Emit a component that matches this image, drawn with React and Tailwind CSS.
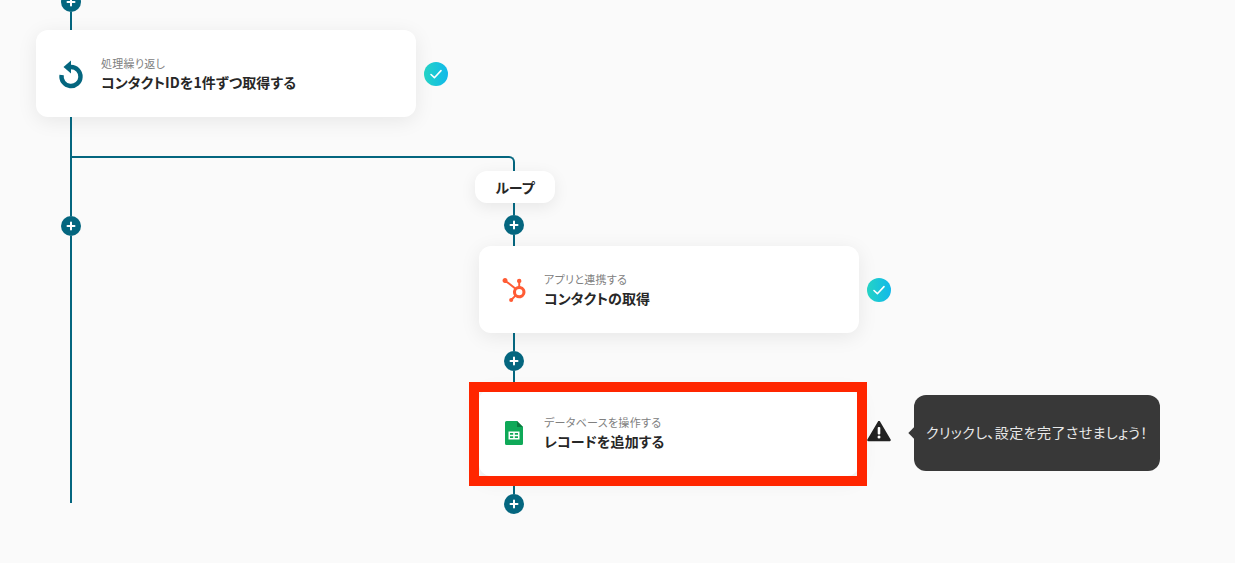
import React from "react";
import { SiHubspot } from "react-icons/si";

// vertical connector piece, centred in the 70px wide stem
function Line({ h }) {
  return <div className={`w-[2px] bg-[#04667f] ${h}`}></div>;
}

function Plus() {
  return (
    <div className="w-5 h-5 rounded-full bg-[#04667f] flex items-center justify-center shrink-0">
      <svg width="10" height="10" viewBox="0 0 10 10">
        <path d="M5 1.5v7M1.5 5h7" stroke="#fff" strokeWidth="2" strokeLinecap="round" />
      </svg>
    </div>
  );
}

function Check() {
  return (
    <div className="w-6 h-6 rounded-full bg-gradient-to-r from-[#26d3c4] to-[#12b8ea] flex items-center justify-center shrink-0">
      <svg width="14" height="14" viewBox="0 0 14 14" fill="none">
        <path d="M2 7.5l3.4 3.2L12 3.6" stroke="#fff" strokeWidth="1.6" strokeLinecap="round" strokeLinejoin="round" />
      </svg>
    </div>
  );
}

function Warning() {
  return (
    <svg width="24" height="24" viewBox="0 2 24 24" className="shrink-0">
      <path d="M12 3L22.6 21H1.4z" fill="#222222" stroke="#222222" strokeWidth="2.4" strokeLinejoin="round" />
      <rect x="10.7" y="8" width="2.6" height="7.5" rx="1" fill="#fff" />
      <circle cx="12" cy="18" r="1.5" fill="#fff" />
    </svg>
  );
}

function RepeatIcon() {
  return (
    <svg width="32" height="32" viewBox="0 0 32 32" fill="none">
      <path d="M16 9A9.5 9.5 0 1 1 6.6 17" stroke="#04667f" strokeWidth="4.4" />
      <path d="M8.5 9L16 2.5V15.5Z" fill="#04667f" />
    </svg>
  );
}

function SheetsIcon() {
  return (
    <svg width="32" height="32" viewBox="0 0 32 32">
      <path d="M8.5 4h10.5l6 6v16.5a1.5 1.5 0 0 1-1.5 1.5h-15a1.5 1.5 0 0 1-1.5-1.5V5.5A1.5 1.5 0 0 1 8.5 4z" fill="#0fa958" />
      <path d="M19 4l6 6h-6z" fill="#0a7a3f" />
      <path d="M10.5 14.5h11v8h-11zM12 16v1.8h3.2V16zM16.8 16v1.8H20V16zM12 19.2V21h3.2v-1.8zM16.8 19.2V21H20v-1.8z" fill="#fff" fillRule="evenodd" />
    </svg>
  );
}

function Card({ icon, label, title }) {
  return (
    <div className="w-[380px] h-[87px] shrink-0 bg-white rounded-xl shadow-[0_4px_20px_rgba(0,0,0,0.08)] flex items-center pl-[19px] gap-[14px]">
      <div className="w-8 h-8 flex items-center justify-center shrink-0">{icon}</div>
      <div className="flex flex-col gap-[1px]">
        <span className="text-[11px] leading-4 tracking-[0.3px] text-[#808080]">{label}</span>
        <span className="text-sm leading-5 tracking-[0.1px] font-bold text-[#272727]">{title}</span>
      </div>
    </div>
  );
}

export default function App() {
  return (
    <div className="h-[563px] overflow-hidden bg-[#fafafa] font-['Noto_Sans_CJK_JP','Noto_Sans',sans-serif] [font-feature-settings:'palt']">
      <div className="pl-9 -mt-2 flex flex-col">
        {/* first stem */}
        <div className="w-[70px] flex flex-col items-center">
          <Plus />
          <Line h="h-[18px]" />
        </div>
        <div className="flex items-center gap-2">
          <Card icon={<RepeatIcon />} label="処理繰り返し" title="コンタクトIDを1件ずつ取得する" />
          <Check />
        </div>

        <div className="flex">
          {/* main trunk */}
          <div className="w-[70px] shrink-0 flex flex-col items-center">
            <Line h="h-[99px]" />
            <Plus />
            <Line h="h-[267px]" />
          </div>

          {/* loop branch */}
          <div className="flex flex-col pt-[39px]">
            <div className="w-[444px] h-[15px] -ml-[35px] border-t-2 border-r-2 border-[#04667f] rounded-tr-md"></div>
            <div className="ml-[373px] flex flex-col">
              <div className="w-20 h-8 -ml-1 bg-white rounded-xl shadow-[0_4px_16px_rgba(0,0,0,0.08)] flex items-center justify-center text-sm font-bold text-[#272727]">
                ループ
              </div>
              <div className="w-[70px] flex flex-col items-center">
                <Line h="h-3" />
                <Plus />
                <Line h="h-[11px]" />
              </div>
              <div className="flex items-center gap-2">
                <Card
                  icon={<SiHubspot className="text-[#ff5c35] w-6 h-6" />}
                  label="アプリと連携する"
                  title="コンタクトの取得"
                />
                <Check />
              </div>
              <div className="w-[70px] flex flex-col items-center">
                <Line h="h-[18px]" />
                <Plus />
                <Line h="h-[18px]" />
              </div>
              <div className="flex items-center gap-2">
                <div className="relative">
                  <Card icon={<SheetsIcon />} label="データベースを操作する" title="レコードを追加する" />
                  <div className="absolute -left-[10px] -top-[7px] w-[398px] h-[104px] border-[10px] border-[#ff2600]"></div>
                </div>
                <Warning />
                <div className="relative ml-[15px] w-[246px] h-[76px] shrink-0 bg-[#383838] rounded-xl flex items-center pl-3 pb-[2px] text-sm tracking-[0.4px] text-[#e8e8e8] whitespace-nowrap">
                  <div className="absolute -left-[4px] top-[34px] w-2 h-2 bg-[#383838] rotate-45"></div>
                  クリックし、設定を完了させましょう！
                </div>
              </div>
              <div className="w-[70px] flex flex-col items-center">
                <Line h="h-[18px]" />
                <Plus />
              </div>
            </div>
          </div>
        </div>
      </div>
    </div>
  );
}
